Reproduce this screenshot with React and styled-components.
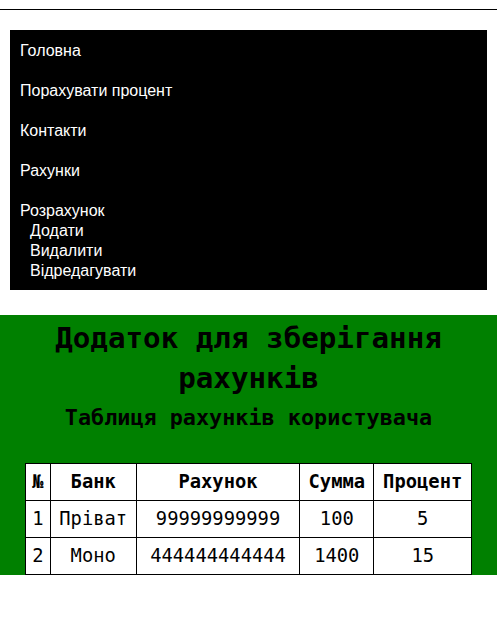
import React from "react";
import styled, { createGlobalStyle } from "styled-components";

const Global = createGlobalStyle`
  html, body {
    margin: 0;
    padding: 0;
    background: #fff;
  }
  body {
    font-family: "Liberation Sans", Arial, sans-serif;
  }
`;

const Page = styled.div`
  padding-top: 9px;
`;

const Rule = styled.div`
  border-top: 1px solid #000;
`;

const Menu = styled.nav`
  margin: 20px 10px 25px;
  background: #000;
  padding: 11px 10px 9px;
  color: #fff;
  display: flex;
  flex-direction: column;
  gap: 20px;
`;

const MenuItem = styled.div`
  font-size: 16px;
  line-height: 20px;
`;

const SubItem = styled.div`
  font-size: 16px;
  line-height: 20px;
  padding-left: 10px;
`;

const Main = styled.section`
  background: #008000;
  padding-top: 3px;
  font-family: "DejaVu Sans Mono", "Liberation Mono", monospace;
  text-align: center;
`;

const Title = styled.h1`
  margin: 0;
  font-size: 29.2px;
  line-height: 40px;
  font-weight: bold;
`;

const Subtitle = styled.h2`
  margin: 7px 0 32px;
  font-size: 21.8px;
  line-height: 26px;
  font-weight: bold;
`;

const Table = styled.table`
  width: 90%;
  margin: 0 auto;
  border-collapse: collapse;
  background: #fff;
  font-size: 18.8px;
`;

const Th = styled.th`
  border: 1px solid #000;
  padding: 7px 5px;
  line-height: 22px;
  font-weight: bold;
`;

const Td = styled.td`
  border: 1px solid #000;
  padding: 7px 5px;
  line-height: 22px;
`;

const accounts = [
  { id: 1, bank: "Пріват", number: "99999999999", sum: 100, percent: 5 },
  { id: 2, bank: "Моно", number: "444444444444", sum: 1400, percent: 15 },
];

export default function App() {
  return (
    <>
      <Global />
      <Page>
        <Rule />
        <Menu>
          <MenuItem>Головна</MenuItem>
          <MenuItem>Порахувати процент</MenuItem>
          <MenuItem>Контакти</MenuItem>
          <MenuItem>Рахунки</MenuItem>
          <div>
            <MenuItem>Розрахунок</MenuItem>
            <SubItem>Додати</SubItem>
            <SubItem>Видалити</SubItem>
            <SubItem>Відредагувати</SubItem>
          </div>
        </Menu>
        <Main>
          <Title>Додаток для зберігання рахунків</Title>
          <Subtitle>Таблиця рахунків користувача</Subtitle>
          <Table>
            <colgroup>
              <col style={{ width: 25 }} />
              <col style={{ width: 86 }} />
              <col style={{ width: 164 }} />
              <col style={{ width: 74 }} />
              <col style={{ width: 98 }} />
            </colgroup>
            <thead>
              <tr>
                <Th>№</Th>
                <Th>Банк</Th>
                <Th>Рахунок</Th>
                <Th>Сумма</Th>
                <Th>Процент</Th>
              </tr>
            </thead>
            <tbody>
              {accounts.map((a) => (
                <tr key={a.id}>
                  <Td>{a.id}</Td>
                  <Td>{a.bank}</Td>
                  <Td>{a.number}</Td>
                  <Td>{a.sum}</Td>
                  <Td>{a.percent}</Td>
                </tr>
              ))}
            </tbody>
          </Table>
        </Main>
      </Page>
    </>
  );
}
